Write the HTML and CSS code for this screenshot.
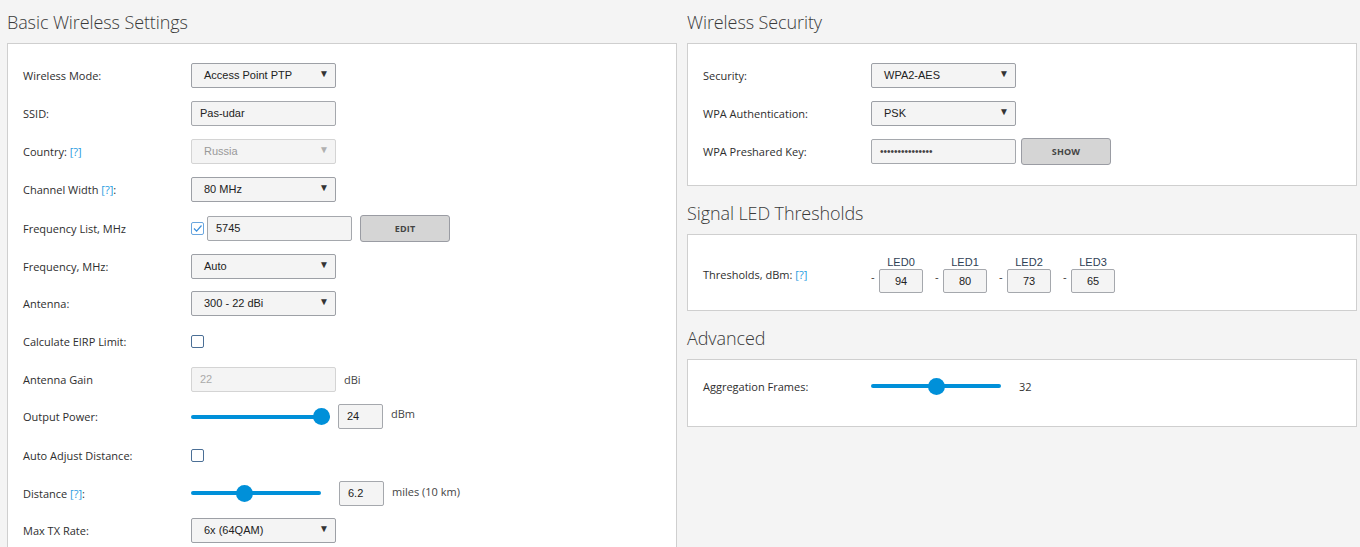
FILE: index.html
```html
<!DOCTYPE html>
<html>
<head>
<meta charset="utf-8">
<title>Wireless</title>
<link rel="stylesheet" href="styles.css">
</head>
<body>
<div class="page">
  <div class="col">
    <section class="section">
      <h2 class="title">Basic Wireless Settings</h2>
      <div class="panel panel-left">
        <div class="row"><span class="label">Wireless Mode:</span><div class="field"><div class="select"><span>Access Point PTP</span><span class="arrow">▼</span></div></div></div>
        <div class="row"><span class="label">SSID:</span><div class="field"><div class="input w145">Pas-udar</div></div></div>
        <div class="row"><span class="label">Country: <a class="help">[?]</a></span><div class="field"><div class="select disabled"><span>Russia</span><span class="arrow">▼</span></div></div></div>
        <div class="row"><span class="label">Channel Width <a class="help">[?]</a>:</span><div class="field"><div class="select"><span>80 MHz</span><span class="arrow">▼</span></div></div></div>
        <div class="row r40"><span class="label">Frequency List, MHz</span><div class="field gap3"><span class="check checked"><svg viewBox="0 0 13 13" width="13" height="13"><path d="M3 6.5 L5.6 9.2 L10.5 3.5" fill="none" stroke="#3a8fdc" stroke-width="1.2"/></svg></span><div class="input w145">5745</div><button class="btn ml5">EDIT</button></div></div>
        <div class="row r36"><span class="label">Frequency, MHz:</span><div class="field"><div class="select"><span>Auto</span><span class="arrow">▼</span></div></div></div>
        <div class="row"><span class="label">Antenna:</span><div class="field"><div class="select"><span>300 - 22 dBi</span><span class="arrow">▼</span></div></div></div>
        <div class="row r39"><span class="label">Calculate EIRP Limit:</span><div class="field"><span class="check"></span></div></div>
        <div class="row r37"><span class="label">Antenna Gain</span><div class="field"><div class="input w145 disabled">22</div><span class="unit">dBi</span></div></div>
        <div class="row r37"><span class="label">Output Power:</span><div class="field"><input class="range w139" type="range" min="0" max="24" value="24"><div class="input w45">24</div><span class="unit up">dBm</span></div></div>
        <div class="row r40"><span class="label">Auto Adjust Distance:</span><div class="field"><span class="check"></span></div></div>
        <div class="row r36"><span class="label">Distance <a class="help">[?]</a>:</span><div class="field"><input class="range w130" type="range" min="0" max="100" value="40"><div class="input w45 ml10">6.2</div><span class="unit up2">miles (10 km)</span></div></div>
        <div class="row"><span class="label">Max TX Rate:</span><div class="field"><div class="select"><span>6x (64QAM)</span><span class="arrow">▼</span></div></div></div>
      </div>
    </section>
  </div>
  <div class="col">
    <section class="section">
      <h2 class="title">Wireless Security</h2>
      <div class="panel panel-sec">
        <div class="row"><span class="label">Security:</span><div class="field"><div class="select"><span>WPA2-AES</span><span class="arrow">▼</span></div></div></div>
        <div class="row"><span class="label">WPA Authentication:</span><div class="field"><div class="select"><span>PSK</span><span class="arrow">▼</span></div></div></div>
        <div class="row r39"><span class="label">WPA Preshared Key:</span><div class="field gap5"><div class="input w145 dots">•••••••••••••••</div><button class="btn">SHOW</button></div></div>
      </div>
    </section>
    <section class="section">
      <h2 class="title">Signal LED Thresholds</h2>
      <div class="panel panel-led">
        <div class="row-led"><span class="label led-label">Thresholds, dBm: <a class="help">[?]</a></span>
          <div class="leds">
            <div class="led"><span class="dash">-</span><div class="led-col"><span class="led-name">LED0</span><div class="box">94</div></div></div>
            <div class="led"><span class="dash">-</span><div class="led-col"><span class="led-name">LED1</span><div class="box">80</div></div></div>
            <div class="led"><span class="dash">-</span><div class="led-col"><span class="led-name">LED2</span><div class="box">73</div></div></div>
            <div class="led"><span class="dash">-</span><div class="led-col"><span class="led-name">LED3</span><div class="box">65</div></div></div>
          </div>
        </div>
      </div>
    </section>
    <section class="section">
      <h2 class="title">Advanced</h2>
      <div class="panel panel-adv">
        <div class="row"><span class="label">Aggregation Frames:</span><div class="field"><input class="range w130" type="range" min="1" max="63" value="32"><span class="value">32</span></div></div>
      </div>
    </section>
  </div>
</div>
</body>
</html>
```

FILE: styles.css
```css
html, body {
  margin: 0;
  padding: 0;
  background: #f4f4f4;
  height: 547px;
  overflow: hidden;
}
body {
  font-family: "Open Sans", "Liberation Sans", sans-serif;
  color: #333;
}
.page {
  display: grid;
  grid-template-columns: 670px 670px;
  column-gap: 10px;
  padding-left: 7px;
}
.col {
  display: flex;
  flex-direction: column;
  gap: 5px;
}
.title {
  margin: 0;
  padding-top: 1px;
  font-size: 18px;
  font-weight: 300;
  line-height: 42px;
  color: #3a3a3a;
  letter-spacing: -0.1px;
}
.panel {
  background: #fff;
  border: 1px solid #cfcfcf;
  padding: 12px 15px 0 15px;
}
.panel-left { padding-bottom: 30px; }
.panel-sec { padding-bottom: 14px; }
.panel-led { padding: 21px 15px 17px 15px; }
.panel-adv { padding: 7px 15px 21px 15px; }
.row {
  display: grid;
  grid-template-columns: 168px 1fr;
  align-items: center;
  height: 38px;
}
.r36 { height: 36px; }
.r37 { height: 37px; }
.r39 { height: 39px; }
.r40 { height: 40px; }
.label {
  font-size: 11px;
  color: #2e2e2e;
}
.help {
  color: #1f9be1;
  text-decoration: none;
}
.field {
  display: flex;
  align-items: center;
  gap: 8px;
}
.field.gap3 { gap: 3px; }
.field.gap5 { gap: 5px; }
.ml5 { margin-left: 5px; }
.select {
  box-sizing: border-box;
  width: 145px;
  height: 25px;
  border: 1px solid #9da0a6;
  border-radius: 2px;
  background: #f4f4f4;
  display: flex;
  align-items: center;
  justify-content: space-between;
  padding: 0 6px 1px 12px;
  font-family: "Liberation Sans", Arial, sans-serif;
  font-size: 11px;
  color: #222;
}
.select .arrow {
  font-size: 10px;
  color: #333;
  margin-top: -3px;
}
.select.disabled {
  border-color: #d4d4d4;
  color: #999;
}
.select.disabled .arrow { color: #b0b0b0; }
.input {
  box-sizing: border-box;
  height: 25px;
  border: 1px solid #a5a8ad;
  border-radius: 2px;
  background: #f4f4f4;
  display: flex;
  align-items: center;
  padding: 0 8px 1px 8px;
  font-family: "Liberation Sans", Arial, sans-serif;
  font-size: 11px;
  color: #222;
}
.w145 { width: 145px; }
.w45 { width: 45px; }
.ml10 { margin-left: 10px; }
.input.disabled {
  border-color: #d4d4d4;
  color: #aaa;
}
.dots {
  font-size: 10px;
  letter-spacing: 0;
  color: #444;
}
.btn {
  box-sizing: border-box;
  width: 90px;
  height: 27px;
  background: #d5d5d5;
  border: 1px solid #9a9ca3;
  border-radius: 3px;
  font-family: "Open Sans", "Liberation Sans", sans-serif;
  font-weight: 700;
  font-size: 9px;
  color: #444;
  letter-spacing: 0.2px;
  padding: 0;
}
.check {
  box-sizing: border-box;
  display: inline-block;
  width: 13px;
  height: 13px;
  border: 1px solid #4b6f96;
  border-radius: 2px;
  background: #fff;
  position: relative;
}
.check.checked {
  border-color: #6aa6df;
}
.check svg {
  position: absolute;
  left: -1px;
  top: -1px;
}
.unit {
  font-size: 11px;
  color: #444;
}
.unit.up { margin-bottom: 6px; }
.unit.up2 { margin-bottom: 4px; }
.range {
  -webkit-appearance: none;
  appearance: none;
  margin: 0;
  padding: 0;
  height: 18px;
  background: transparent;
}
.w139 { width: 139px; }
.w130 { width: 130px; }
.range::-webkit-slider-runnable-track {
  height: 4px;
  background: #0090d9;
  border-radius: 2px;
}
.range::-webkit-slider-thumb {
  -webkit-appearance: none;
  appearance: none;
  width: 17px;
  height: 17px;
  border-radius: 50%;
  background: #0090d9;
  margin-top: -6.5px;
  border: none;
}
.value {
  font-family: "Open Sans", "Liberation Sans", sans-serif;
  font-size: 11px;
  color: #333;
  margin-left: 10px;
}
.row-led {
  display: grid;
  grid-template-columns: 168px 1fr;
  align-items: center;
}
.leds {
  display: flex;
  gap: 12px;
}
.led {
  display: flex;
  align-items: flex-end;
  gap: 2px;
}
.dash {
  font-family: "Liberation Sans", Arial, sans-serif;
  font-size: 11px;
  color: #444;
  width: 6px;
  padding-bottom: 10px;
}
.led-col {
  display: flex;
  flex-direction: column;
  align-items: center;
}
.led-name {
  font-family: "Liberation Sans", Arial, sans-serif;
  font-size: 11px;
  color: #2f3f55;
  line-height: 13px;
}
.box {
  box-sizing: border-box;
  width: 44px;
  height: 24px;
  border: 1px solid #a5a8ad;
  border-radius: 2px;
  background: #f4f4f4;
  display: flex;
  align-items: center;
  justify-content: center;
  font-family: "Liberation Sans", Arial, sans-serif;
  font-size: 11px;
  color: #222;
}
```
